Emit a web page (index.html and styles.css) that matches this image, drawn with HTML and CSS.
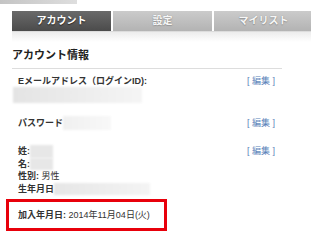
FILE: index.html
```html
<!DOCTYPE html>
<html lang="ja">

<head>
    <meta charset="UTF-8">
    <meta name="viewport" content="width=device-width, initial-scale=1.0">
    <title>アカウント</title>
    <link rel="stylesheet" href="styles.css">
</head>

<body>
    <div class="topbar"></div>
    <ul class="tabs">
        <li class="active">アカウント</li>
        <li>設定</li>
        <li>マイリスト</li>
    </ul>
    <div class="tab_shadow"></div>

    <div class="content">
        <h2>アカウント情報</h2>

        <div class="row">
            <div class="info">
                <div class="label">Eメールアドレス（ログインID):</div>
                <div class="blur email"></div>
            </div>
            <a class="edit" href="#">[ 編集 ]</a>
        </div>

        <div class="row pw">
            <div class="info line">
                <span class="label">パスワード</span><span class="blur pass"></span>
            </div>
            <a class="edit" href="#">[ 編集 ]</a>
        </div>

        <div class="row profile">
            <div class="info">
                <div class="line"><span class="label">姓:</span><span class="blur name"></span></div>
                <div class="line"><span class="label">名:</span><span class="blur name"></span></div>
                <div class="line"><span class="label">性別:</span> 男性</div>
                <div class="line"><span class="label">生年月日</span><span class="blur birth"></span></div>
            </div>
            <a class="edit" href="#">[ 編集 ]</a>
        </div>

        <div class="joined">
            <span class="label">加入年月日:</span> 2014年11月04日(火)
        </div>
    </div>
</body>

</html>
```

FILE: styles.css
```css
* {
    margin: 0;
    padding: 0;
}

body {
    width: 311px;
    overflow: hidden;
    background-color: #fff;
    color: #333;
    font-family: "Liberation Sans", "Noto Sans CJK JP", sans-serif;
    font-size: 9px;
}

.topbar {
    width: 77px;
    height: 4px;
    background: linear-gradient(to right, #c4c4c4, #dedede);
}

.tabs {
    display: flex;
    gap: 2px;
    margin: 7px 0 0 12px;
    list-style: none;
    border-bottom: 1px solid #dcdcdc;
}

.tabs li {
    flex: none;
    width: 99px;
    height: 20px;
    line-height: 19px;
    text-align: center;
    font-size: 10px;
    font-weight: bold;
    color: #f6f6f6;
    background: linear-gradient(#cbcbcb, #b3b3b3);
    text-shadow: 0 0 1px #888, 0 1px 1px #999;
}

.tabs li.active {
    background: linear-gradient(#6a6a6a, #4b4b4b);
    color: #fff;
    text-shadow: 0 1px 1px #222;
}

.tab_shadow {
    height: 10px;
    margin-left: 12px;
    background: linear-gradient(#ececec, #fff);
}

.content {
    width: 270px;
    margin-left: 12px;
}

.content h2 {
    margin-top: 5px;
    padding-bottom: 5px;
    border-bottom: 1px solid #ddd;
    font-size: 11px;
    line-height: 16px;
    color: #222;
}

.row {
    display: flex;
    justify-content: space-between;
    align-items: flex-start;
    margin-top: 6px;
    padding: 0 7px 0 6px;
    line-height: 13px;
}

.row.pw {
    margin-top: 13px;
    line-height: 14px;
}

.row.profile {
    margin-top: 15px;
    line-height: 12.5px;
}

.label {
    font-weight: bold;
    color: #333;
}

.line {
    display: flex;
    align-items: center;
    white-space: pre;
}

.edit {
    color: #5b83ba;
    text-decoration: none;
    white-space: pre;
}

.blur {
    display: block;
    background: linear-gradient(to right, #e4e4e4, #f5f5f5);
    filter: blur(0.8px);
}

.blur.email {
    width: 129px;
    height: 16px;
    margin: -1px 0 0 -5px;
}

.blur.pass {
    width: 48px;
    height: 14px;
    background: linear-gradient(to right, #f0f0f0, #f8f8f8);
}

.blur.name {
    width: 23px;
    height: 12.5px;
    background: #e7e7e7;
}

.blur.birth {
    width: 96px;
    height: 12.5px;
    background: linear-gradient(to right, #e6e6e6, #f4f4f4);
}

.joined {
    width: 146px;
    height: 26px;
    margin: 3.5px 0 0 -6px;
    padding-left: 9px;
    border: 3px solid #e8000b;
    line-height: 26px;
    white-space: nowrap;
}
```
